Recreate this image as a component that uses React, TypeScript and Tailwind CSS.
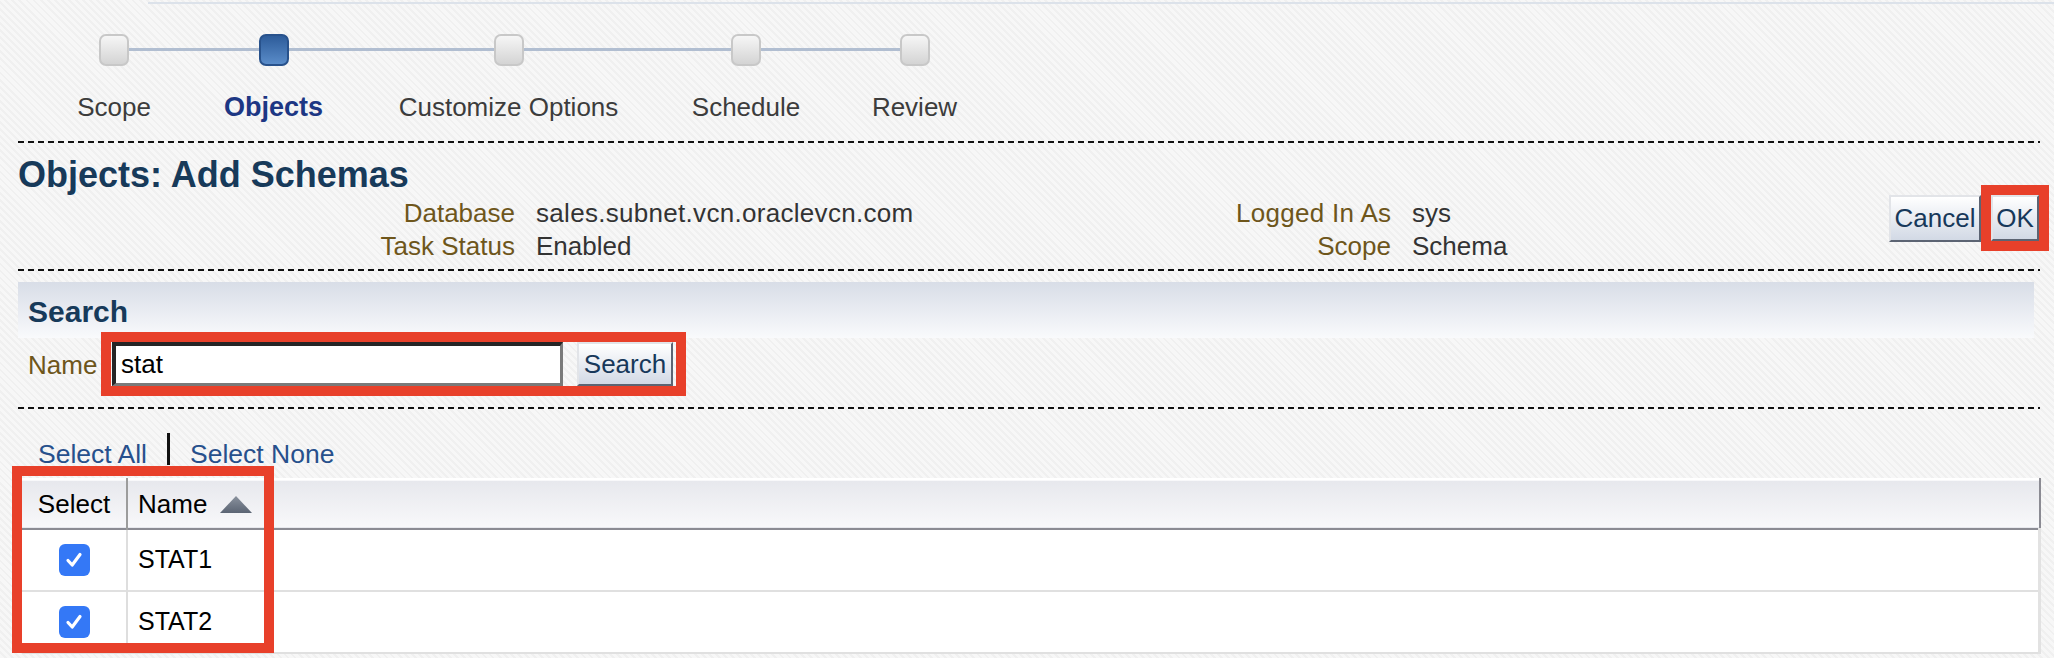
import React from "react";

const steps = [
  { label: "Scope", w: "w-[72px]" },
  { label: "Objects", w: "w-[103px]", active: true },
  { label: "Customize Options", w: "w-[223px]" },
  { label: "Schedule", w: "w-[108px]" },
  { label: "Review", w: "w-[85px]" },
];

function Dashed() {
  return <div className="h-[2px] w-full bg-[repeating-linear-gradient(90deg,#111_0px,#111_6px,transparent_6px,transparent_10px)]" />;
}

function CheckBox() {
  return (
    <div className="w-[31px] h-[32px] rounded-[6px] bg-[#3478f6] flex items-center justify-center">
      <svg width="20" height="20" viewBox="0 0 20 20">
        <path d="M4 10.5 L8.2 15 L16 4.5" fill="none" stroke="#fff" strokeWidth="3.2" strokeLinecap="round" strokeLinejoin="round" />
      </svg>
    </div>
  );
}

function Btn({ label, w, h }: { label: string; w: string; h: string }) {
  return (
    <div
      className={`${w} ${h} flex items-center justify-center text-[26px] text-[#17385a] bg-gradient-to-b from-white to-[#d2d9e5] border-2 border-t-[#e2e4e8] border-l-[#e2e4e8] border-r-[#5c6473] border-b-[#5c6473]`}
    >
      {label}
    </div>
  );
}

export default function App() {
  return (
    <div className="w-full h-[658px] overflow-hidden font-['Liberation_Sans',Arial,sans-serif] bg-[repeating-linear-gradient(45deg,#f7f7f7_0px,#f7f7f7_3px,#f0f0f0_3px,#f0f0f0_5px)]">
      {/* top rule */}
      <div className="ml-[148px] mt-[2px] h-[2px] bg-[#dce2ea]" />

      <div className="pl-[18px] pr-[14px]">
        {/* train stepper */}
        <div className="relative ml-[60px] mt-[30px] flex gap-[72px] w-fit">
          <div className="absolute left-[36px] right-[42px] top-[14px] h-[3px] bg-[#b1bed1]" />
          {steps.map((s) => (
            <div key={s.label} className={`${s.w} relative flex flex-col items-center`}>
              <div
                className={
                  s.active
                    ? "w-[30px] h-[32px] rounded-[7px] border-2 border-[#28528c] bg-gradient-to-b from-[#2d5c9a] to-[#5a8cc9]"
                    : "w-[30px] h-[32px] rounded-[7px] border-2 border-[#c8c8c8] bg-gradient-to-b from-[#f6f6f6] to-[#d4d4d4]"
                }
              />
              <div
                className={
                  s.active
                    ? "mt-[26px] leading-[30px] text-[27px] font-bold text-[#1d3784] whitespace-nowrap"
                    : "mt-[26px] leading-[30px] text-[26px] text-[#3c3c3c] whitespace-nowrap"
                }
              >
                {s.label}
              </div>
            </div>
          ))}
        </div>

        <div className="mt-[19px]">
          <Dashed />
        </div>

        {/* header */}
        <h1 className="mt-[12px] text-[36px] leading-[40px] font-bold text-[#173a5a]">Objects: Add Schemas</h1>
        <div className="flex items-start">
          <div className="mt-[2px] flex-1 grid grid-cols-[497px_721px_155px_1fr] text-[26px] leading-[33px]">
            <div className="text-right text-[#6e561b]">Database</div>
            <div className="pl-[21px] text-[#333] tracking-[0.3px]">sales.subnet.vcn.oraclevcn.com</div>
            <div className="text-right text-[#6e561b] whitespace-nowrap tracking-[0.3px]">Logged In As</div>
            <div className="pl-[21px] text-[#333]">sys</div>
            <div className="text-right text-[#6e561b]">Task Status</div>
            <div className="pl-[21px] text-[#333]">Enabled</div>
            <div className="text-right text-[#6e561b]">Scope</div>
            <div className="pl-[21px] text-[#333]">Schema</div>
          </div>
          <div className="-mt-[10px] -mr-[9px] flex items-center">
            <Btn label="Cancel" w="w-[92px]" h="h-[47px]" />
            <div className="border-[10px] border-[#e8402a]">
              <Btn label="OK" w="w-[48px]" h="h-[46px]" />
            </div>
          </div>
        </div>

        <div className="mt-[6px]">
          <Dashed />
        </div>

        {/* search */}
        <div className="mt-[11px] mr-[6px] h-[56px] bg-gradient-to-b from-[#d8dde7] to-[#f9fafc] pl-[10px] pt-[13px]">
          <div className="text-[30px] leading-[34px] font-bold text-[#173a5a]">Search</div>
        </div>
        <div className="relative -mt-[6px] flex items-center">
          <div className="pl-[10px] w-[83px] text-[26px] text-[#6e561b] pt-[3px]">Name</div>
          <div className="border-[10px] border-[#e8402a] flex items-center">
            <div className="ml-[1px] w-[451px] h-[44px] bg-white border-t-4 border-l-4 border-r-[3px] border-b-[3px] border-t-[#252525] border-l-[#252525] border-r-[#7a7a7a] border-b-[#7a7a7a] flex items-center pl-[5px] text-[26px] text-black">
              stat
            </div>
            <div className="ml-[14px] mr-[3px]">
              <Btn label="Search" w="w-[96px]" h="h-[44px]" />
            </div>
          </div>
        </div>

        <div className="mt-[11px]">
          <Dashed />
        </div>

        {/* select links */}
        <div className="pl-[20px] pt-[24px] flex items-end text-[26.5px] leading-[30px] text-[#27508c]">
          <span>Select All</span>
          <span className="mx-[20px] mb-[4px] w-[3px] h-[32px] bg-[#111]" />
          <span>Select None</span>
        </div>

        {/* table */}
        <div className="relative mt-[9px] ml-[4px] -mr-[1px]">
          <table className="w-full border-collapse text-[26px] text-black">
            <thead>
              <tr className="h-[50px] bg-gradient-to-b from-[#e7e8ed] to-[#f8f8fa] border-t-2 border-t-white border-b-2 border-b-[#8b8b93]">
                <th className="w-[105px] font-normal text-center border-r-2 border-r-[#9c9c9c]">Select</th>
                <th className="font-normal text-left pl-[10px] border-r-2 border-r-[#8b8b93]">
                  <span className="inline-flex items-center gap-[13px]">
                    Name
                    <svg width="32" height="17" viewBox="0 0 32 17">
                      <defs>
                        <linearGradient id="tri" x1="0" y1="0" x2="0" y2="1">
                          <stop offset="0" stopColor="#8a929e" />
                          <stop offset="1" stopColor="#5b6473" />
                        </linearGradient>
                      </defs>
                      <polygon points="16,0 32,17 0,17" fill="url(#tri)" />
                    </svg>
                  </span>
                </th>
              </tr>
            </thead>
            <tbody className="bg-white">
              {["STAT1", "STAT2"].map((n) => (
                <tr key={n} className="h-[62px] border-b-2 border-b-[#e0e0e0]">
                  <td className="border-r-2 border-r-[#dedede]">
                    <div className="flex justify-center">
                      <CheckBox />
                    </div>
                  </td>
                  <td className="pl-[10px] text-[25px] border-r-[3px] border-r-[#e2e2e2]">{n}</td>
                </tr>
              ))}
            </tbody>
          </table>
          {/* annotation box */}
          <div className="absolute -left-[10px] -top-[12px] w-[262px] h-[187px] border-[10px] border-[#e8402a]" />
        </div>
      </div>
    </div>
  );
}
